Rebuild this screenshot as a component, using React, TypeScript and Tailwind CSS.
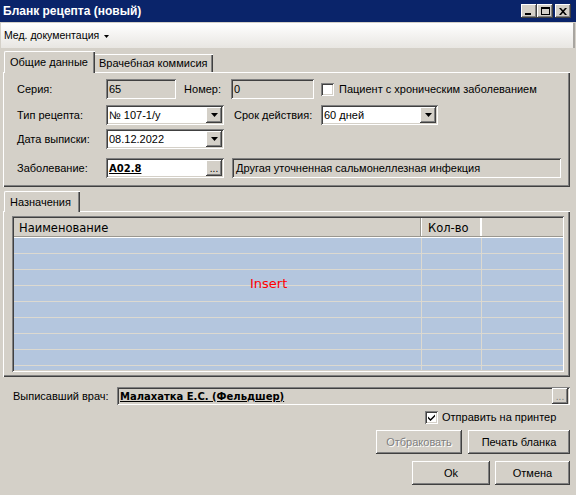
import React from 'react';

const raised =
  'shadow-[inset_-1px_-1px_#404040,inset_1px_1px_#ffffff,inset_-2px_-2px_#808080,inset_2px_2px_#d4d0c8]';
const sunken =
  'shadow-[inset_1px_1px_#808080,inset_-1px_-1px_#ffffff,inset_2px_2px_#404040,inset_-2px_-2px_#d4d0c8]';

function DropBtn() {
  return (
    <div className={`w-[16px] h-[16px] bg-[#d4d0c8] ${raised} flex items-center justify-center`}>
      <svg width="7" height="4" viewBox="0 0 7 4">
        <path d="M0 0h7L3.5 4z" fill="#000" />
      </svg>
    </div>
  );
}

function DotsBtn({ faded }: { faded?: boolean }) {
  return (
    <div
      className={`w-[16px] h-[16px] bg-[#d4d0c8] ${raised} flex items-end justify-center pb-[2px] text-[10px] leading-none ${
        faded ? 'text-[#808080]' : 'text-black'
      }`}
    >
      ...
    </div>
  );
}

function Combo({ value, width }: { value: string; width: string }) {
  return (
    <div className={`${width} h-[20px] bg-white ${sunken} flex items-center pl-[3px] pr-[2px]`}>
      <span className="flex-1 leading-none">{value}</span>
      <DropBtn />
    </div>
  );
}

function Label({ children, width }: { children: React.ReactNode; width: string }) {
  return <div className={`${width} shrink-0`}>{children}</div>;
}

function Checkbox({ checked }: { checked?: boolean }) {
  return (
    <div className={`w-[13px] h-[13px] bg-white ${sunken} flex items-center justify-center`}>
      {checked && (
        <svg width="7" height="7" viewBox="0 0 7 7">
          <path d="M0 2.5l2.5 2.5L7 0.5v2L2.5 7L0 4.5z" fill="#000" />
        </svg>
      )}
    </div>
  );
}

function Button({ children, width, disabled }: { children: React.ReactNode; width: string; disabled?: boolean }) {
  return (
    <div
      className={`${width} h-[24px] bg-[#d4d0c8] ${raised} flex items-center justify-center ${
        disabled ? 'text-[#808080] [text-shadow:1px_1px_#ffffff]' : 'text-black'
      }`}
    >
      {children}
    </div>
  );
}

function TitleBtn({ children }: { children: React.ReactNode }) {
  return (
    <div className={`w-[16px] h-[14px] bg-[#d4d0c8] ${raised} flex items-center justify-center`}>{children}</div>
  );
}

export default function App() {
  const rows = Array.from({ length: 9 });

  return (
    <div className="w-[576px] h-[495px] bg-[#d4d0c8] flex flex-col overflow-hidden whitespace-nowrap font-['Liberation_Sans',Arial,sans-serif] text-[11px] text-black">
      {/* Title bar */}
      <div className="h-[22px] bg-[#0a246a] flex items-center pl-[3px] pr-[5px] shrink-0">
        <span className="flex-1 text-white font-bold text-[12px]">Бланк рецепта (новый)</span>
        <div className="flex items-center">
          <TitleBtn>
            <div className="w-[6px] h-[2px] bg-black mt-[6px] -ml-[2px]" />
          </TitleBtn>
          <TitleBtn>
            <div className="w-[9px] h-[8px] border border-black border-t-2" />
          </TitleBtn>
          <div className="w-[2px]" />
          <TitleBtn>
            <svg width="8" height="7" viewBox="0 0 8 7">
              <path d="M0 0h2l2 2.3L6 0h2L5 3.5 8 7H6L4 4.7 2 7H0l3-3.5z" fill="#000" />
            </svg>
          </TitleBtn>
        </div>
      </div>

      {/* Menu bar */}
      <div className="h-[25px] mt-[1px] mx-[1px] bg-gradient-to-b from-white to-[#e8e6e2] border-r-2 border-[#a8a5a0] flex items-center pl-[3px] shrink-0">
        <span className="text-[10.5px]">Мед. документация</span>
        <svg width="5" height="3" viewBox="0 0 5 3" className="ml-[5px] mt-[1px]">
          <path d="M0 0h5L2.5 3z" fill="#000" />
        </svg>
      </div>

      {/* Tabs top */}
      <div className="flex items-end h-[22px] mt-[2px] ml-[4px] shrink-0">
        <div className="w-[91px] h-[22px] bg-[#d4d0c8] border-l border-t border-white rounded-tl-[2px] shadow-[inset_-1px_0_#404040,inset_-2px_0_#808080] flex items-center pl-[5px] relative z-10 -mb-[1px]">
          Общие данные
        </div>
        <div className="w-[118px] h-[18px] bg-[#d4d0c8] border-t border-white shadow-[inset_-1px_0_#404040,inset_-2px_0_#808080] flex items-center pl-[4px]">
          Врачебная коммисия
        </div>
      </div>
      <div className="ml-[3px] w-[567px] h-[115px] border-l border-t border-white shadow-[inset_-1px_-1px_#404040,inset_-2px_-2px_#808080] flex flex-col pl-[13px] pt-[6px] shrink-0">
        <div className="flex items-center h-[20px]">
          <Label width="w-[89px]">Серия:</Label>
          <div className={`w-[70px] h-[20px] ${sunken} flex items-center pl-[3px]`}>65</div>
          <div className="w-[55px] text-right pr-[10px]">Номер:</div>
          <div className={`w-[83px] h-[20px] ${sunken} flex items-center pl-[3px]`}>0</div>
          <div className="ml-[7px]">
            <Checkbox />
          </div>
          <span className="ml-[5px]">Пациент с хроническим заболеванием</span>
        </div>
        <div className="flex items-center h-[20px] mt-[6px]">
          <Label width="w-[89px]">Тип рецепта:</Label>
          <Combo value="№ 107-1/у" width="w-[118px]" />
          <div className="w-[97px] pl-[10px]">Срок действия:</div>
          <Combo value="60 дней" width="w-[117px]" />
        </div>
        <div className="flex items-center h-[20px] mt-[4px]">
          <Label width="w-[89px]">Дата выписки:</Label>
          <Combo value="08.12.2022" width="w-[118px]" />
        </div>
        <div className="flex items-center h-[20px] mt-[9px]">
          <Label width="w-[89px]">Заболевание:</Label>
          <div className={`w-[118px] h-[20px] bg-white ${sunken} flex items-center pl-[3px] pr-[2px]`}>
            <span className="flex-1 font-bold underline font-['DejaVu_Sans',sans-serif] text-[10px]">A02.8</span>
            <DotsBtn />
          </div>
          <div className={`ml-[8px] w-[329px] h-[20px] ${sunken} flex items-center pl-[4px]`}>
            Другая уточненная сальмонеллезная инфекция
          </div>
        </div>
      </div>

      {/* Tabs bottom */}
      <div className="flex items-end h-[21px] mt-[3px] ml-[4px] shrink-0">
        <div className="w-[76px] h-[21px] bg-[#d4d0c8] border-l border-t border-white rounded-tl-[2px] shadow-[inset_-1px_0_#404040,inset_-2px_0_#808080] flex items-center pl-[5px] relative z-10 -mb-[1px]">
          Назначения
        </div>
      </div>
      <div className="ml-[3px] w-[567px] h-[166px] border-l border-t border-white shadow-[inset_-1px_-1px_#404040,inset_-2px_-2px_#808080] pl-[8px] pt-[4px] shrink-0">
        <div className={`relative w-[552px] h-[156px] ${sunken} p-[2px] pr-[1px] overflow-hidden`}>
          <div className="flex flex-col h-full overflow-hidden font-['DejaVu_Sans',sans-serif] text-[11.5px]">
            <div className="flex h-[19px] shrink-0 bg-[#d4d0c8] border-b border-[#9a978f] leading-none">
              <div className="w-[407px] flex items-end pb-[2px] pl-[5px] border-r border-[#9a978f]">Наименование</div>
              <div className="w-[60px] flex items-end pb-[2px] pl-[6px] border-l border-white border-r border-[#9a978f]">
                Кол-во
              </div>
              <div className="flex-1 border-l border-white" />
            </div>
            <div className="border-t border-white" />
            {rows.map((_, i) => (
              <div key={i} className="flex h-[16px] shrink-0 bg-[#b4c6de] border-b border-[#dcd9d0]">
                <div className="w-[408px] border-r border-[#dcd9d0]" />
                <div className="w-[60px] border-r border-[#dcd9d0]" />
                <div className="flex-1" />
              </div>
            ))}
          </div>
          <span className="absolute left-[238px] top-[58px] text-[#ff0000] font-['DejaVu_Sans',sans-serif] text-[13px]">
            Insert
          </span>
        </div>
      </div>

      {/* Doctor row */}
      <div className="flex items-center h-[18px] mt-[10px] pl-[13px] shrink-0">
        <Label width="w-[104px]">Выписавший врач:</Label>
        <div className={`w-[453px] h-[18px] ${sunken} flex items-center pl-[3px] pr-[2px]`}>
          <span className="flex-1 font-bold underline font-['DejaVu_Sans',sans-serif] text-[10px]">
            Малахатка Е.С. (Фельдшер)
          </span>
          <DotsBtn faded />
        </div>
      </div>

      {/* Printer checkbox */}
      <div className="flex items-center h-[13px] mt-[6px] pl-[425px] shrink-0">
        <Checkbox checked />
        <span className="ml-[4px]">Отправить на принтер</span>
      </div>

      {/* Buttons */}
      <div className="flex justify-end gap-[6px] mt-[6px] pr-[6px] shrink-0">
        <Button width="w-[86px]" disabled>
          Отбраковать
        </Button>
        <Button width="w-[102px]">Печать бланка</Button>
      </div>
      <div className="flex justify-end gap-[5px] mt-[7px] pr-[6px] shrink-0">
        <Button width="w-[78px]">Ok</Button>
        <Button width="w-[75px]">Отмена</Button>
      </div>
    </div>
  );
}
